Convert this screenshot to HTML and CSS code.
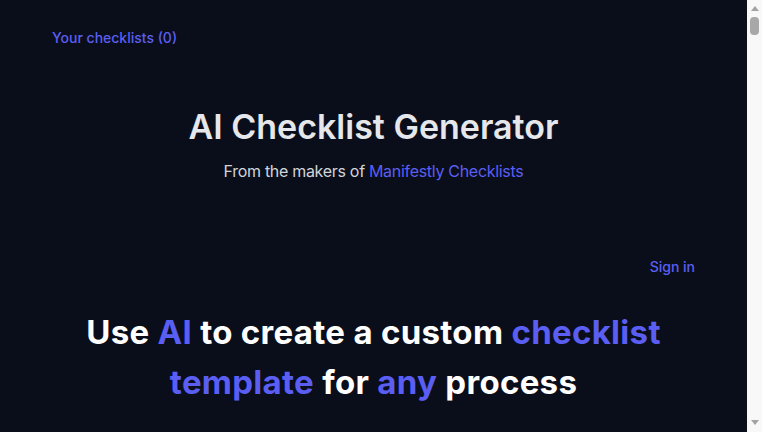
FILE: index.html
```html
<!DOCTYPE html>
<html lang="en">
<head>
    <meta charset="UTF-8">
    <meta name="viewport" content="width=device-width, initial-scale=1.0">
    <title>AI Checklist Generator</title>
    <link rel="stylesheet" href="styles.css">
</head>
<body>
    <div class="page">
        <nav class="top-nav">
            <a href="#" class="nav-link">Your checklists (0)</a>
        </nav>
        <header class="page-header">
            <h1 class="title">AI Checklist Generator</h1>
            <p class="subtitle">From the makers of <a href="#" class="brand-link">Manifestly Checklists</a></p>
        </header>
        <div class="auth-row">
            <a href="#" class="nav-link">Sign in</a>
        </div>
        <section class="hero">
            <h2 class="hero-title">Use <span class="accent">AI</span> to create a custom <span class="accent">checklist template</span> for <span class="accent">any</span> process</h2>
        </section>
    </div>
    <div class="scrollbar" aria-hidden="true">
        <div class="arrow arrow-up"></div>
        <div class="thumb"></div>
        <div class="track"></div>
        <div class="arrow arrow-down"></div>
    </div>
</body>
</html>
```

FILE: styles.css
```css
body {
    margin: 0;
    height: 100vh;
    display: flex;
    overflow: hidden;
    background-color: #0a0e1a;
    color: #e5e7eb;
    font-family: Inter, "Noto Sans", sans-serif;
}
.page {
    flex: 1;
    overflow: hidden;
}
a {
    text-decoration: none;
}
.nav-link {
    color: #5b5ef2;
    font-size: 14px;
    font-weight: 500;
    line-height: 20px;
}
.top-nav {
    padding: 27px 52px 0;
}
.page-header {
    text-align: center;
    margin-top: 59px;
}
.title {
    margin: 0;
    font-size: 34px;
    font-weight: 600;
    line-height: 40px;
    color: #e5e7eb;
}
.subtitle {
    margin: 12px 0 0;
    font-size: 16px;
    line-height: 24px;
    color: #d1d5db;
    letter-spacing: -0.3px;
}
.brand-link {
    color: #5b5ef2;
}
.auth-row {
    display: flex;
    justify-content: flex-end;
    padding: 0 52px;
    margin-top: 74px;
}
.hero {
    text-align: center;
    padding: 0 60px;
    margin-top: 30px;
}
.hero-title {
    margin: 0;
    font-size: 33px;
    font-weight: 700;
    line-height: 50px;
    color: #ffffff;
    letter-spacing: 0.3px;
}
.accent {
    color: #5b5ef2;
}

/* fake browser scrollbar */
.scrollbar {
    width: 15px;
    flex-shrink: 0;
    background-color: #f8f8f8;
    display: flex;
    flex-direction: column;
    align-items: center;
}
.arrow {
    width: 0;
    height: 0;
    border-left: 4.5px solid transparent;
    border-right: 4.5px solid transparent;
}
.arrow-up {
    margin-top: 6px;
    border-bottom: 5px solid #a3a3a3;
}
.arrow-down {
    margin-bottom: 7px;
    border-top: 5px solid #a3a3a3;
}
.thumb {
    width: 9px;
    height: 18px;
    margin-top: 6px;
    border-radius: 4px;
    background-color: #a8a8a8;
}
.track {
    flex: 1;
}
```
